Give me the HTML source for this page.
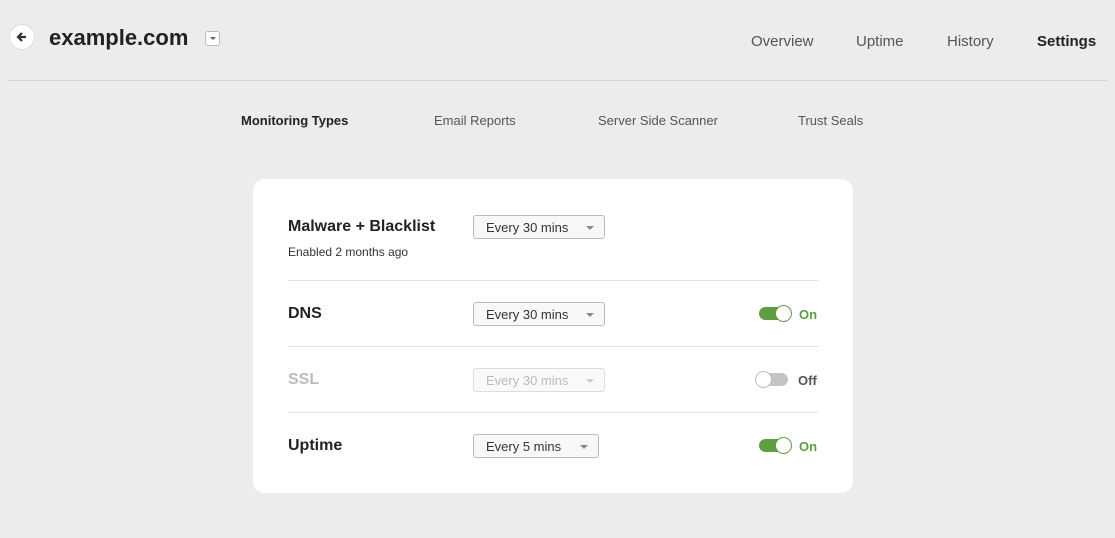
<!DOCTYPE html>
<html><head><style>
*{margin:0;padding:0;box-sizing:border-box}
body{width:1115px;height:538px;background:#ececec;font-family:"Liberation Sans",sans-serif;position:relative;overflow:hidden;color:#222}
.a{position:absolute;white-space:nowrap}
.nav{font-size:15px;color:#555;top:33px}
.sub{font-size:13px;color:#555;top:113px}
.card{position:absolute;left:253px;top:179px;width:600px;height:314px;background:#fff;border-radius:12px}
.t{font-size:16px;font-weight:bold;color:#222}
.sel{position:absolute;height:24px;border:1px solid #bbb;border-radius:3px;background:#f8f8f8;font-size:13px;color:#333;padding:4px 0 0 12px}
.sel:after{content:"";position:absolute;right:10px;top:10px;border:4px solid transparent;border-top:4px solid #888;border-bottom:0}
.dis{color:#bbb;border-color:#ddd;background:#fafafa}
.dis:after{border-top-color:#ccc}
.hr{position:absolute;left:35px;width:531px;height:1px;background:#e3e3e3}
.tg{position:absolute;width:33px;height:16px}
.tg .tr{position:absolute;left:0;top:2px;width:30px;height:13px;border-radius:7px}
.tg .k{position:absolute;width:17px;height:17px;border-radius:50%;background:#fff;top:0}
.on .tr{background:#5f9d43}.on .k{left:16px;border:1.5px solid #5f9d43}
.off .tr{background:#c4c4c4;left:3px}.off .k{left:0;border:1.5px solid #bbb}
.lab{font-size:13px;font-weight:bold}
</style></head><body>
<div class="a" style="left:9px;top:24px;width:26px;height:26px;border-radius:50%;background:#fff;border:1px solid #ddd"></div>
<svg class="a" style="left:14px;top:29px" width="16" height="16" viewBox="0 0 16 16"><path d="M12 8H4M8 4L4 8l4 4" stroke="#333" stroke-width="2.2" fill="none"/></svg>
<div class="a" style="left:49px;top:25px;font-size:22px;font-weight:bold;color:#222">example.com</div>
<div class="a" style="left:205px;top:31px;width:15px;height:15px;border:1px solid #bbb;border-radius:3px;background:#fff"></div>
<div class="a" style="left:210px;top:37px;border:3px solid transparent;border-top:3px solid #666;border-bottom:0"></div>
<div class="a nav" style="left:751px">Overview</div>
<div class="a nav" style="left:856px">Uptime</div>
<div class="a nav" style="left:947px">History</div>
<div class="a nav" style="left:1037px;font-weight:bold;color:#222">Settings</div>
<div class="a" style="left:8px;top:80px;width:1099px;height:1px;background:#d6d6d6"></div>
<div class="a sub" style="left:241px;font-weight:bold;color:#222">Monitoring Types</div>
<div class="a sub" style="left:434px">Email Reports</div>
<div class="a sub" style="left:598px">Server Side Scanner</div>
<div class="a sub" style="left:798px">Trust Seals</div>
<div class="card">
<div class="a t" style="left:35px;top:39px">Malware + Blacklist</div>
<div class="a" style="left:35px;top:66px;font-size:12px;color:#333">Enabled 2 months ago</div>
<div class="sel" style="left:220px;top:36px;width:132px">Every 30 mins</div>
<div class="hr" style="top:101px"></div>
<div class="a t" style="left:35px;top:126px">DNS</div>
<div class="sel" style="left:220px;top:123px;width:132px">Every 30 mins</div>
<div class="tg on" style="left:506px;top:126px"><div class="tr"></div><div class="k"></div></div>
<div class="a lab" style="left:546px;top:128px;color:#5f9d43">On</div>
<div class="hr" style="top:167px"></div>
<div class="a t" style="left:35px;top:192px;color:#bbb">SSL</div>
<div class="sel dis" style="left:220px;top:189px;width:132px">Every 30 mins</div>
<div class="tg off" style="left:502px;top:192px"><div class="tr"></div><div class="k"></div></div>
<div class="a lab" style="left:545px;top:194px;color:#555">Off</div>
<div class="hr" style="top:233px"></div>
<div class="a t" style="left:35px;top:258px">Uptime</div>
<div class="sel" style="left:220px;top:255px;width:126px">Every 5 mins</div>
<div class="tg on" style="left:506px;top:258px"><div class="tr"></div><div class="k"></div></div>
<div class="a lab" style="left:546px;top:260px;color:#5f9d43">On</div>
</div>
</body></html>
